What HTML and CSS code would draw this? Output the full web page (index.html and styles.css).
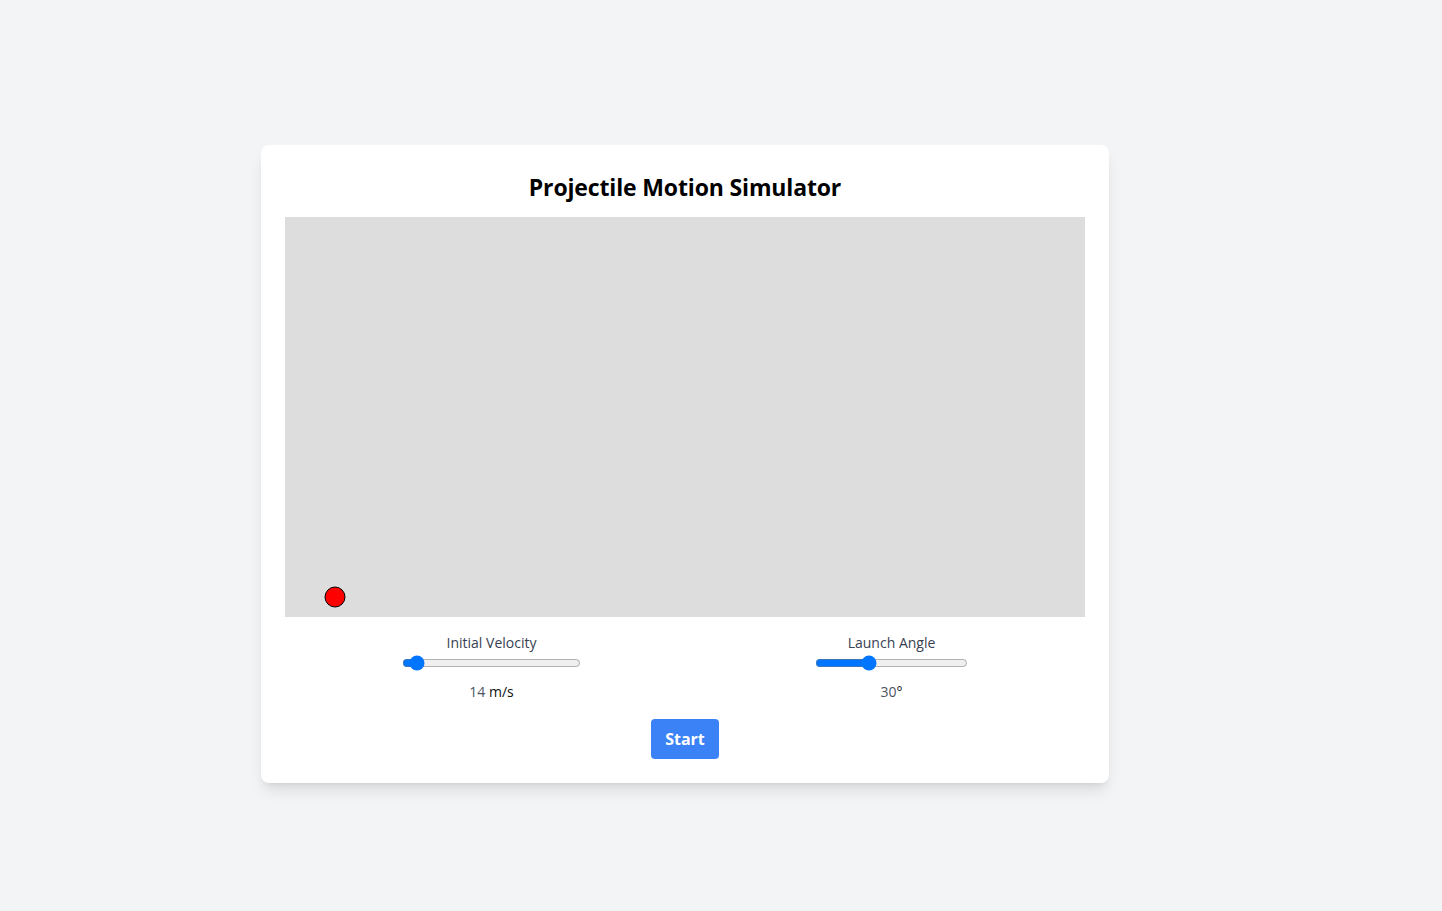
FILE: index.html
```html
<!DOCTYPE html>
<html lang="en">
<head>
<meta charset="utf-8">
<title>Projectile Motion Simulator</title>
<link rel="stylesheet" href="styles.css">
</head>
<body>
<div class="stage">
  <div class="card">
    <h1 class="title">Projectile Motion Simulator</h1>
    <svg class="sim" width="800" height="400" viewBox="0 0 800 400">
      <rect width="800" height="400" fill="#dddddd"/>
      <circle cx="50" cy="380" r="10" fill="#ff0000" stroke="#000" stroke-width="1"/>
    </svg>
    <div class="controls">
      <div class="control">
        <label class="label" for="vel">Initial Velocity</label>
        <input class="range range-vel" id="vel" type="range" min="10" max="100" value="14">
        <div class="value"><span class="num">14</span> m/s</div>
      </div>
      <div class="control">
        <label class="label" for="ang">Launch Angle</label>
        <input class="range range-ang" id="ang" type="range" min="0" max="90" value="30">
        <div class="value"><span class="num">30</span>°</div>
      </div>
    </div>
    <div class="actions">
      <button class="btn">Start</button>
    </div>
  </div>
</div>
</body>
</html>
```
FILE: styles.css
```css
html, body {
  margin: 0;
  padding: 0;
  background: #f3f4f6;
  font-family: "Open Sans", "Noto Sans", sans-serif;
}
.stage {
  width: 1370px;
  height: 928px;
  display: flex;
  align-items: center;
  justify-content: center;
}
.card {
  background: #fff;
  border-radius: 8px;
  padding: 24px;
  box-shadow: 0 10px 15px -3px rgba(0,0,0,0.1), 0 4px 6px -4px rgba(0,0,0,0.1);
  display: flex;
  flex-direction: column;
}
.title {
  margin: 0 0 14px;
  padding-top: 2px;
  font-size: 23px;
  letter-spacing: -0.15px;
  line-height: 32px;
  font-weight: 700;
  text-align: center;
  color: #000;
}
.sim {
  display: block;
}
.controls {
  display: flex;
  justify-content: space-around;
  margin-top: 16px;
}
.control {
  display: flex;
  flex-direction: column;
  align-items: center;
}
.label {
  font-size: 14px;
  line-height: 20px;
  color: #374151;
  font-weight: 500;
}
.range {
  margin: 2px 0;
  height: 16px;
}
.range-vel { width: 179px; }
.range-ang { width: 153px; }
.value {
  margin-top: 9px;
  font-size: 14px;
  line-height: 20px;
  color: #111;
}
.num { color: #4b5563; }
.actions {
  display: flex;
  justify-content: center;
  margin-top: 17px;
}
.btn {
  background: #3b82f6;
  color: #fff;
  border: 0;
  border-radius: 4px;
  padding: 0 14px;
  height: 40px;
  font-family: inherit;
  font-size: 16px;
  font-weight: 700;
}
```
